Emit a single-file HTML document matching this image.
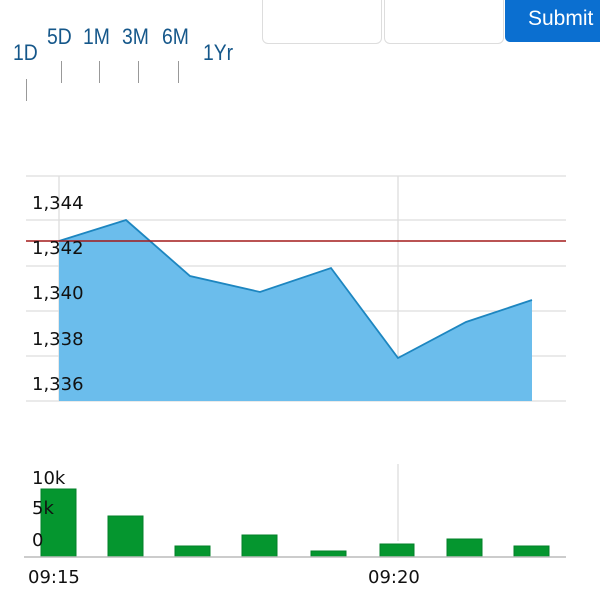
<!DOCTYPE html>
<html><head><style>
body{margin:0;width:600px;height:600px;background:#fff;position:relative;overflow:hidden;font-family:"Liberation Sans",sans-serif}
.t{position:absolute;color:#15578a;font-size:22px;transform:scaleX(0.88);transform-origin:left top}
.tk{position:absolute;width:1px;background:#999;height:22px}
.box{position:absolute;top:-10px;height:52px;border:1px solid #ddd;border-radius:6px;background:#fff}
</style></head><body>
<div class="t" style="left:13px;top:40px">1D</div>
<div class="t" style="left:47px;top:24px">5D</div>
<div class="t" style="left:83px;top:24px">1M</div>
<div class="t" style="left:122px;top:24px">3M</div>
<div class="t" style="left:162px;top:24px">6M</div>
<div class="t" style="left:203px;top:40px">1Yr</div>
<div class="tk" style="left:26px;top:79px"></div>
<div class="tk" style="left:61px;top:61px"></div>
<div class="tk" style="left:99px;top:61px"></div>
<div class="tk" style="left:138px;top:61px"></div>
<div class="tk" style="left:178px;top:61px"></div>
<div class="box" style="left:262px;width:118px"></div>
<div class="box" style="left:384px;width:118px"></div>
<div style="position:absolute;left:505px;top:-10px;width:110px;height:52px;background:#0b6fd0;border-radius:5px;color:#fff;font-size:21px;line-height:20px;padding:19px 0 0 23px;box-sizing:border-box">Submit</div>
<svg width="600" height="600" style="position:absolute;left:0;top:0" font-family="DejaVu Sans, sans-serif">
<g stroke="#ddd" stroke-width="1.3">
<line x1="26" y1="176" x2="566" y2="176"/><line x1="26" y1="220" x2="566" y2="220"/>
<line x1="26" y1="266" x2="566" y2="266"/><line x1="26" y1="311" x2="566" y2="311"/>
<line x1="26" y1="356" x2="566" y2="356"/><line x1="26" y1="401" x2="566" y2="401"/>
<line x1="59" y1="176" x2="59" y2="401"/><line x1="398" y1="176" x2="398" y2="401"/>
<line x1="398" y1="464" x2="398" y2="541"/>
</g>
<path d="M59,241 L126,220 L190,276 L260,292 L331,268 L398,358 L466,322 L532,300 L532,401 L59,401Z" fill="#6bbdec"/>
<path d="M59,241 L126,220 L190,276 L260,292 L331,268 L398,358 L466,322 L532,300" fill="none" stroke="#1d86c0" stroke-width="1.8"/>
<line x1="26" y1="241" x2="566" y2="241" stroke="#a31a1a" stroke-width="1.6"/>
<g font-size="18" fill="#111">
<text x="32" y="209">1,344</text><text x="32" y="254">1,342</text><text x="32" y="299">1,340</text>
<text x="32" y="345">1,338</text><text x="32" y="390">1,336</text>
</g>
<g fill="#05962f" stroke="#03802a" stroke-width="1">
<rect x="41" y="489" width="35" height="68"/><rect x="108" y="516" width="35" height="41"/>
<rect x="175" y="546" width="35" height="11"/><rect x="242" y="535" width="35" height="22"/>
<rect x="311" y="551" width="35" height="6"/><rect x="380" y="544" width="34" height="13"/>
<rect x="447" y="539" width="35" height="18"/><rect x="514" y="546" width="35" height="11"/>
</g>
<line x1="24" y1="557" x2="566" y2="557" stroke="#bbb" stroke-width="1.5"/>
<g font-size="18" fill="#111">
<text x="32" y="484">10k</text><text x="32" y="514">5k</text><text x="32" y="546">0</text>
<text x="28" y="583">09:15</text><text x="368" y="583">09:20</text>
</g>
</svg>
</body></html>
